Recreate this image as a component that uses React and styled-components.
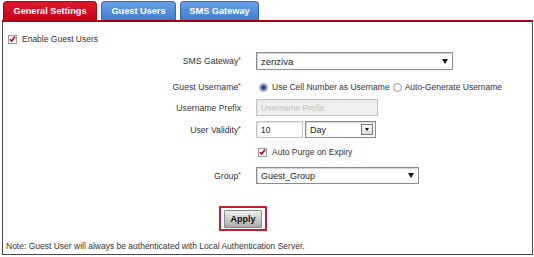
import React, { useState } from 'react';
import styled, { createGlobalStyle } from 'styled-components';

const GlobalStyle = createGlobalStyle`
    html, body {
        margin: 0;
        padding: 0;
        background: #fff;
    }
    body {
        font-family: 'Liberation Sans', Arial, sans-serif;
        color: #333;
    }
`;

const Frame = styled.div`
    width: 531px;
    margin-left: 2px;
    padding-top: 1px;
`;

const TabBar = styled.div`
    display: flex;
    gap: 4px;
    height: 19px;
    padding-left: 1px;
    border-bottom: 2px solid #a8000f;
`;

const Tab = styled.div`
    width: ${(p) => p.$w}px;
    height: 19px;
    box-sizing: border-box;
    display: flex;
    align-items: center;
    justify-content: center;
    font-size: 9.2px;
    font-weight: bold;
    color: #fff;
    border-radius: 4px 4px 0 0;
    background: ${(p) =>
        p.$active
            ? 'linear-gradient(#dc1a2e, #c8001a)'
            : 'linear-gradient(#6a9fe4, #417dd3)'};
    border: 1px solid ${(p) => (p.$active ? '#b00014' : '#3467b0')};
    border-bottom: none;
`;

const Panel = styled.div`
    height: 233px;
    box-sizing: border-box;
    border: 1px solid #4a4a4a;
    border-top: none;
    display: flex;
    flex-direction: column;
`;

const Row = styled.div`
    display: flex;
    align-items: center;
    height: ${(p) => p.$h}px;
    margin-top: ${(p) => p.$mt}px;
`;

const FieldRow = styled.div`
    display: grid;
    grid-template-columns: 238px 1fr;
    column-gap: 15px;
    align-items: center;
    height: ${(p) => p.$h}px;
    margin-top: ${(p) => p.$mt}px;
`;

const Label = styled.div`
    text-align: right;
    font-size: 8.7px;
    color: #333;
`;

const Req = styled.span`
    color: #d0001a;
    font-size: 7px;
    vertical-align: top;
`;

const Text = styled.span`
    font-size: 8.5px;
    color: #333;
    margin-left: ${(p) => p.$ml || 0}px;
`;

const CheckBox = styled.span`
    width: 9px;
    height: 9px;
    box-sizing: border-box;
    border: 1px solid #9a9a9a;
    background: linear-gradient(#f4f4f4, #fff);
    display: inline-flex;
    align-items: center;
    justify-content: center;
    margin-left: ${(p) => p.$ml || 0}px;
    flex-shrink: 0;
`;

const Radio = styled.span`
    width: 9px;
    height: 9px;
    box-sizing: border-box;
    border-radius: 50%;
    border: 1px solid #9a9a9a;
    background: ${(p) =>
        p.$on
            ? 'radial-gradient(circle, #1d4f8c 0 2px, #7fa8d6 2.5px, #dfe8f2 4px)'
            : 'radial-gradient(circle, #fff 0 2px, #e6e6e6 4px)'};
    margin-left: ${(p) => p.$ml || 0}px;
    flex-shrink: 0;
`;

const Controls = styled.div`
    display: flex;
    align-items: center;
`;

const SelectBox = styled.div`
    width: ${(p) => p.$w}px;
    height: ${(p) => p.$h}px;
    box-sizing: border-box;
    border: 1px solid #8c8c8c;
    box-shadow: inset 1px 1px 0 #d6d6d6;
    background: #fff;
    display: flex;
    align-items: center;
    justify-content: space-between;
    padding: 0 4px 0 4px;
    font-size: ${(p) => p.$fs || 9}px;
    color: #222;
`;

const Arrow = styled.span`
    width: 0;
    height: 0;
    border-left: 3px solid transparent;
    border-right: 3px solid transparent;
    border-top: 5px solid #111;
`;

const ArrowButton = styled.span`
    width: 12px;
    height: 11px;
    box-sizing: border-box;
    border: 1px solid #777;
    background: linear-gradient(#fafafa, #ddd);
    display: flex;
    align-items: center;
    justify-content: center;
    margin-right: -2px;
`;

const SmallArrow = styled.span`
    width: 0;
    height: 0;
    border-left: 2.5px solid transparent;
    border-right: 2.5px solid transparent;
    border-top: 3px solid #111;
`;

const TextInput = styled.input`
    width: ${(p) => p.$w}px;
    height: 17px;
    box-sizing: border-box;
    border: 1px solid #c4c4c4;
    box-shadow: inset 1px 1px 0 #e4e4e4;
    padding: 0 4px;
    font-family: 'Liberation Sans', Arial, sans-serif;
    font-size: 8.5px;
    color: #222;
    background: ${(p) => (p.disabled ? '#efefef' : '#fff')};
    margin: 0;
    margin-right: ${(p) => p.$mr || 0}px;
    outline: none;

    &::placeholder {
        color: #c2c2c2;
    }
`;

const ApplyRow = styled.div`
    margin-top: 22px;
    padding-left: 216px;
    display: flex;
`;

const ApplyFrame = styled.div`
    width: 48px;
    height: 25px;
    box-sizing: border-box;
    border: 2px solid #c4202c;
    display: flex;
    align-items: center;
    justify-content: center;
`;

const ApplyButton = styled.button`
    width: 38px;
    height: 18px;
    box-sizing: border-box;
    border: 1px solid #8a8a8a;
    border-radius: 1px;
    background: linear-gradient(#f2f2f2, #c4c4c4 60%, #aeaeae);
    font-family: 'Liberation Sans', Arial, sans-serif;
    font-size: 9px;
    font-weight: bold;
    color: #111;
    padding: 0;
    cursor: pointer;
`;

const Note = styled.div`
    margin-top: 10px;
    padding-left: 3px;
    font-size: 8.5px;
    color: #333;
`;

const Check = () => (
    <svg width="8" height="8" viewBox="0 0 8 8">
        <path d="M1 4.2 L3 6.3 L7 1.2" fill="none" stroke="#c0001a" strokeWidth="1.8" />
    </svg>
);

const App = () => {
    const [tab] = useState('general');

    return (
        <Frame>
            <GlobalStyle />
            <TabBar>
                <Tab $w={94} $active={tab === 'general'}>General Settings</Tab>
                <Tab $w={75}>Guest Users</Tab>
                <Tab $w={79}>SMS Gateway</Tab>
            </TabBar>
            <Panel>
                <Row $h={14} $mt={10}>
                    <CheckBox $ml={5}><Check /></CheckBox>
                    <Text $ml={5}>Enable Guest Users</Text>
                </Row>

                <FieldRow $h={18} $mt={6}>
                    <Label>SMS Gateway<Req>*</Req></Label>
                    <SelectBox $w={197} $h={18} $fs={9.5}>
                        <span>zenziva</span>
                        <Arrow />
                    </SelectBox>
                </FieldRow>

                <FieldRow $h={14} $mt={10}>
                    <Label>Guest Username<Req>*</Req></Label>
                    <Controls>
                        <Radio $on $ml={3} />
                        <Text $ml={4}>Use Cell Number as Username</Text>
                        <Radio $ml={3} />
                        <Text $ml={3}>Auto-Generate Username</Text>
                    </Controls>
                </FieldRow>

                <FieldRow $h={17} $mt={5}>
                    <Label>Username Prefix</Label>
                    <Controls>
                        <TextInput $w={122} disabled placeholder="Username Prefix" />
                    </Controls>
                </FieldRow>

                <FieldRow $h={17} $mt={5}>
                    <Label>User Validity<Req>*</Req></Label>
                    <Controls>
                        <TextInput $w={47} $mr={2} defaultValue="10" />
                        <SelectBox $w={71} $h={17} $fs={9}>
                            <span>Day</span>
                            <ArrowButton><SmallArrow /></ArrowButton>
                        </SelectBox>
                    </Controls>
                </FieldRow>

                <FieldRow $h={14} $mt={7}>
                    <span />
                    <Controls>
                        <CheckBox $ml={2}><Check /></CheckBox>
                        <Text $ml={5}>Auto Purge on Expiry</Text>
                    </Controls>
                </FieldRow>

                <FieldRow $h={17} $mt={8}>
                    <Label>Group<Req>*</Req></Label>
                    <SelectBox $w={163} $h={17} $fs={9}>
                        <span>Guest_Group</span>
                        <Arrow />
                    </SelectBox>
                </FieldRow>

                <ApplyRow>
                    <ApplyFrame>
                        <ApplyButton>Apply</ApplyButton>
                    </ApplyFrame>
                </ApplyRow>

                <Note>Note: Guest User will always be authenticated with Local Authentication Server.</Note>
            </Panel>
        </Frame>
    );
};

export default App;
